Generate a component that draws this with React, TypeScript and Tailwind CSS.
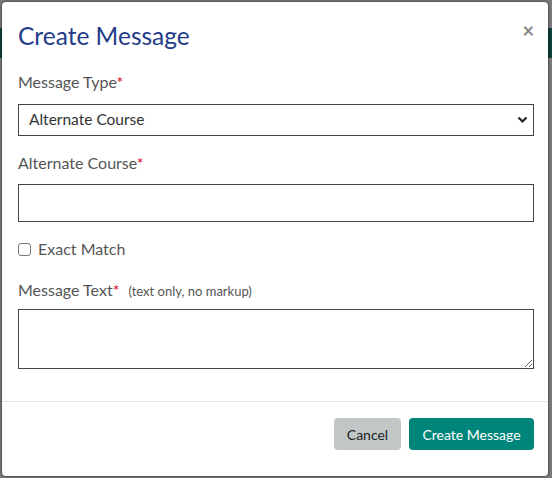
import React from "react";

export default function App() {
  const font = { fontFamily: "Lato, 'Open Sans', Arial, sans-serif" };
  return (
    <div className="relative w-[552px] h-[478px] overflow-hidden bg-[#7a7a7a]" style={font}>
      <div className="absolute left-0 top-[28px] h-[30px] w-full bg-[#0e3f3a]" />
      <div className="absolute inset-0 flex pl-[2px] pt-[2px]">
        <div className="w-[546px] h-[474px] bg-white rounded-[4px] shadow-[0_0_2px_1px_rgba(0,0,0,0.35)] flex flex-col">
          <div className="flex items-start justify-between pl-4 pr-[16px] pt-[21px]">
            <h1 className="text-[24.5px] leading-[26px] text-[#243b8a] font-normal">Create Message</h1>
            <button className="text-[#888] text-[20px] leading-[20px] font-bold mt-[-3px] mr-[-2px]">×</button>
          </div>
          <div className="flex flex-col px-4 pt-[23px] w-[548px]">
            <label className="text-[16px] leading-[20px] text-[#555]">
              Message Type<span className="text-[#d0021b]">*</span>
            </label>
            <div className="relative mt-[12px] w-[516px] h-[32px] border border-[#444] flex items-center pl-[10px]">
              <span className="text-[15.5px] text-[#333]">Alternate Course</span>
              <svg className="absolute right-[5px] top-[11px]" width="11" height="8" viewBox="0 0 11 8">
                <path d="M1.5 1.5 L5.5 5.5 L9.5 1.5" stroke="#222" strokeWidth="2.2" fill="none" />
              </svg>
            </div>
            <label className="mt-[17px] text-[16px] leading-[20px] text-[#555]">
              Alternate Course<span className="text-[#d0021b]">*</span>
            </label>
            <div className="mt-[11px] w-[516px] h-[38px] border border-[#444]" />
            <div className="mt-[18px] flex items-center h-[18px]">
              <span className="w-[13px] h-[13px] border border-[#767676] rounded-[3px] bg-white" />
              <span className="ml-[7px] text-[16px] text-[#555]">Exact Match</span>
            </div>
            <div className="mt-[22px] flex items-baseline h-[20px]">
              <span className="text-[16px] leading-[20px] text-[#555]">
                Message Text<span className="text-[#d0021b]">*</span>
              </span>
              <span className="ml-[9px] text-[13px] text-[#555]">(text only, no markup)</span>
            </div>
            <textarea className="mt-[9px] w-[516px] h-[60px] border border-[#444] outline-none block" />
          </div>
          <div className="mt-[32px] border-t border-[#e2e2e2]" />
          <div className="flex justify-end gap-[8px] pr-[14px] pt-[16px]">
            <button className="h-[32px] w-[67px] rounded-[4px] bg-[#c1c6c6] text-[14px] text-[#222]">Cancel</button>
            <button className="h-[32px] w-[125px] rounded-[4px] bg-[#00857a] text-[14px] text-white">Create Message</button>
          </div>
        </div>
      </div>
    </div>
  );
}
